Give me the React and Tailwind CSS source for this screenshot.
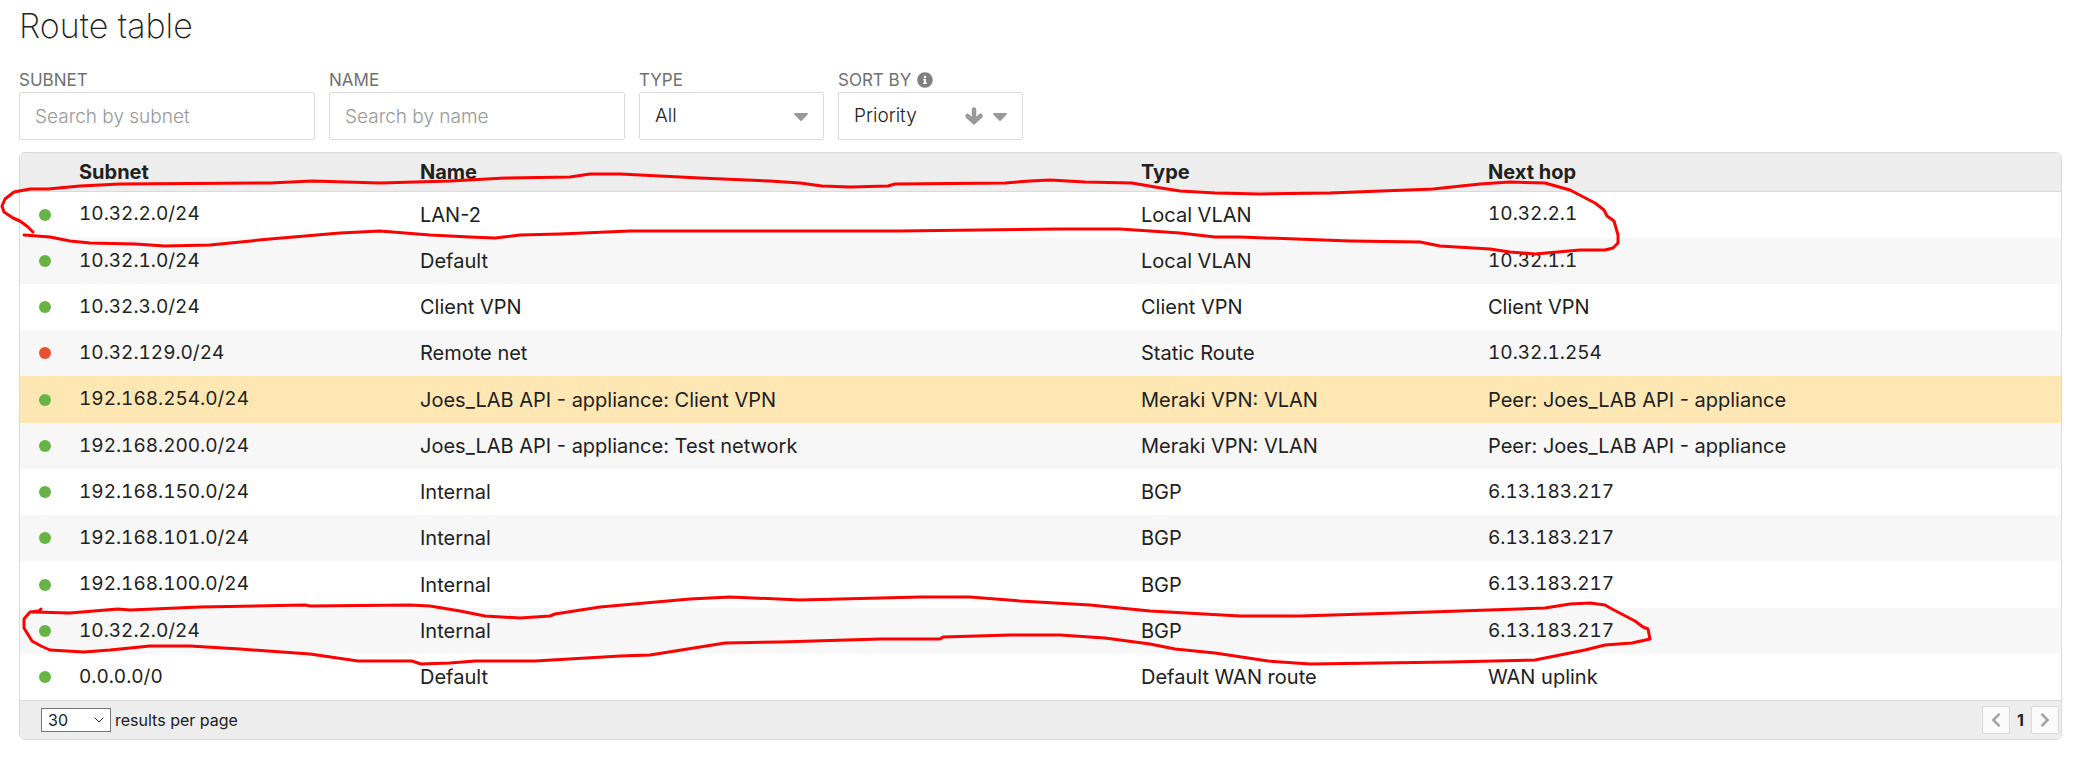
import { FaInfoCircle, FaCaretDown, FaChevronLeft, FaChevronRight } from "react-icons/fa";
import { ChevronDown } from "lucide-react";

const routes = [
  { up: true, subnet: "10.32.2.0/24", name: "LAN-2", type: "Local VLAN", hop: "10.32.2.1" },
  { up: true, subnet: "10.32.1.0/24", name: "Default", type: "Local VLAN", hop: "10.32.1.1" },
  { up: true, subnet: "10.32.3.0/24", name: "Client VPN", type: "Client VPN", hop: "Client VPN" },
  { up: false, subnet: "10.32.129.0/24", name: "Remote net", type: "Static Route", hop: "10.32.1.254" },
  { up: true, subnet: "192.168.254.0/24", name: "Joes_LAB API - appliance: Client VPN", type: "Meraki VPN: VLAN", hop: "Peer: Joes_LAB API - appliance", selected: true },
  { up: true, subnet: "192.168.200.0/24", name: "Joes_LAB API - appliance: Test network", type: "Meraki VPN: VLAN", hop: "Peer: Joes_LAB API - appliance" },
  { up: true, subnet: "192.168.150.0/24", name: "Internal", type: "BGP", hop: "6.13.183.217" },
  { up: true, subnet: "192.168.101.0/24", name: "Internal", type: "BGP", hop: "6.13.183.217" },
  { up: true, subnet: "192.168.100.0/24", name: "Internal", type: "BGP", hop: "6.13.183.217" },
  { up: true, subnet: "10.32.2.0/24", name: "Internal", type: "BGP", hop: "6.13.183.217" },
  { up: true, subnet: "0.0.0.0/0", name: "Default", type: "Default WAN route", hop: "WAN uplink" },
];

const labelClass = "flex h-6 items-center gap-1.5 text-[17px] leading-6 text-[#6f7072]";
const boxClass = "h-12 w-full rounded-xs border border-[#dadada] bg-white px-[15px] text-[19px] font-light";
const pageButtonClass = "flex size-7 items-center justify-center rounded-xs border border-[#dadada] bg-[#fafafa] text-[#a3a3a3]";
const addressClass = "text-[19px] tabular-nums";

const isAddress = (text) => /^[\d./]+$/.test(text);

const SearchField = ({ id, label, placeholder }) => (
  <div className="w-[296px]">
    <label htmlFor={id} className={labelClass}>{label}</label>
    <input id={id} type="text" placeholder={placeholder} className={`${boxClass} placeholder-[#999]`} />
  </div>
);

const SortArrow = () => (
  <svg className="size-5" viewBox="0 0 20 20" fill="none" stroke="currentColor" strokeWidth="4.5" strokeLinecap="round" strokeLinejoin="miter">
    <path d="M10 3.5 V14.5 M3.5 10 L10 16 L16.5 10" />
  </svg>
);

const SelectField = ({ id, label, info, value, arrow }) => (
  <div className="w-[185px]">
    <label htmlFor={id} className={labelClass}>
      {label}
      {info && <FaInfoCircle className="size-4 text-[#808080]" />}
    </label>
    <div className="relative">
      <select id={id} className={`${boxClass} appearance-none`}>
        <option>{value}</option>
      </select>
      <div className="pointer-events-none absolute inset-y-0 right-[11px] flex items-center gap-1 text-[#999]">
        {arrow && <SortArrow />}
        <FaCaretDown className="size-6" />
      </div>
    </div>
  </div>
);

const Row = ({ route }) => (
  <tr className={`h-[46px] nth-[4n+1]:h-[47px] ${route.selected ? "bg-[#ffe7b4]" : "even:bg-[#f7f7f7]"}`}>
    <td className="pl-[19px]">
      <span className={`block size-3 rounded-full ${route.up ? "bg-[#67b346]" : "bg-[#e94f31]"}`} />
    </td>
    <td className={addressClass}>{route.subnet}</td>
    <td>{route.name}</td>
    <td>{route.type}</td>
    <td className={isAddress(route.hop) ? addressClass : ""}>{route.hop}</td>
  </tr>
);

// Hand-drawn loops round the two overlapping routes
const Markup = () => (
  <svg className="pointer-events-none absolute top-0 left-0" width="1700" height="700" fill="none" stroke="#ff0000" strokeWidth="3" strokeLinecap="round" strokeLinejoin="round">
    <path d="M33 232 L28 227 L20 221 L13 218 L4 212 L2 206 L5 199 L14 192 L30 189 L48 189 L80 186 L120 184 L270 183 L312 181 L380 183 L450 181 L505 178 L570 177 L590 174 L620 174 L700 178 L770 181 L800 183 L822 186 L850 187 L888 186 L895 184 L1005 183 L1030 181 L1050 180 L1085 182 L1132 183 L1155 187 L1180 191 L1215 193 L1260 194 L1330 193 L1433 189 L1480 184 L1510 182 L1545 183 L1570 190 L1595 203 L1604 210 L1607 216 L1614 221 L1618 235 L1618 243 L1613 248 L1605 250 L1580 250 L1535 254 L1510 252 L1490 249 L1440 246 L1420 242 L1350 241 L1240 237 L1215 237 L1180 233 L1120 229 L1060 229 L900 231 L630 231 L560 234 L520 235 L495 238 L470 237 L430 235 L380 231 L340 233 L270 239 L210 245 L165 246 L135 244 L90 243 L70 241 L50 237 L24 235" />
    <path d="M41 609 L39 611 L30 612 L24 619 L24 628 L32 641 L41 646 L50 650 L84 652 L110 650 L150 646 L190 646 L240 649 L310 654 L358 661 L412 661 L421 664 L450 663 L475 661 L535 661 L620 656 L650 655 L675 651 L700 647 L725 643 L780 642 L880 639 L940 639 L943 637 L1010 635 L1060 635 L1105 638 L1150 644 L1175 649 L1215 653 L1268 661 L1310 664 L1450 662 L1535 660 L1560 655 L1585 650 L1605 645 L1632 643 L1650 639 L1648 629 L1643 627 L1635 621 L1612 609 L1605 605 L1590 603 L1570 604 L1545 608 L1430 612 L1300 616 L1240 616 L1150 611 L1090 605 L1020 601 L970 597 L920 597 L800 600 L730 597 L690 599 L600 607 L555 614 L550 616 L520 618 L485 616 L460 611 L430 606 L410 605 L310 606 L305 605 L200 607 L130 610 L118 609 L70 613 L33 612" />
  </svg>
);

const App = () => {
  return (
    <div className="relative px-[19px] pt-2 font-['Inter','Liberation_Sans',sans-serif] text-[#212121]">
      <h1 className="text-[34px] leading-9 font-extralight">Route table</h1>

      {/* Filters */}
      <div className="mt-6 flex gap-3.5">
        <SearchField id="subnet" label="SUBNET" placeholder="Search by subnet" />
        <SearchField id="name" label="NAME" placeholder="Search by name" />
        <SelectField id="type" label="TYPE" value="All" />
        <SelectField id="sort" label="SORT BY" value="Priority" info arrow />
      </div>

      {/* Routes */}
      <div className="mt-3 mr-1.5 overflow-hidden rounded-md border border-[#dadada]">
        <table className="w-full table-fixed border-collapse text-left text-xl">
          <colgroup>
            <col className="w-[59px]" />
            <col className="w-[341px]" />
            <col className="w-[721px]" />
            <col className="w-[347px]" />
            <col />
          </colgroup>
          <thead>
            <tr className="h-[38px] border-b border-[#dadada] bg-[#ededed]">
              <th aria-label="Status" />
              <th className="font-bold">Subnet</th>
              <th className="font-bold">Name</th>
              <th className="font-bold">Type</th>
              <th className="font-bold">Next hop</th>
            </tr>
          </thead>
          <tbody>
            {routes.map((route, i) => (
              <Row key={i} route={route} />
            ))}
          </tbody>
        </table>

        {/* Footer */}
        <div className="flex h-[39px] items-center justify-between border-t border-[#dadada] bg-[#ededed] pr-0.5 pl-[21px]">
          <div className="flex items-center gap-1 text-base">
            <div className="relative">
              <select id="per-page" className="block h-6 w-[70px] appearance-none border border-[#767676] bg-white pl-1.5 leading-5">
                <option>30</option>
              </select>
              <ChevronDown className="pointer-events-none absolute top-1 right-1 size-4" strokeWidth={1.5} />
            </div>
            <label htmlFor="per-page">results per page</label>
          </div>
          <div className="flex items-center gap-[7px]">
            <button aria-label="Previous page" className={pageButtonClass}>
              <FaChevronLeft className="size-4" />
            </button>
            <span className="text-base font-bold">1</span>
            <button aria-label="Next page" className={pageButtonClass}>
              <FaChevronRight className="size-4" />
            </button>
          </div>
        </div>
      </div>

      <Markup />
    </div>
  );
};

export default App;
